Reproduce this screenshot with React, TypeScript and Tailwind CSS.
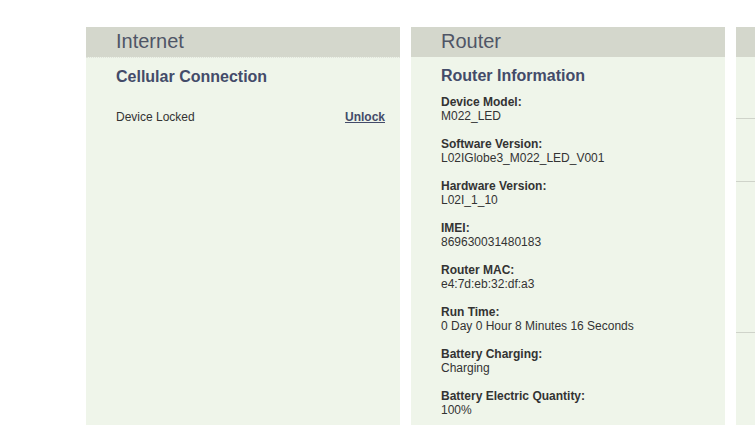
import React from 'react';

const font = { fontFamily: '"Liberation Sans", Arial, sans-serif' };

// Router info rows
const routerInfo = [
  { label: 'Device Model:', value: 'M022_LED' },
  { label: 'Software Version:', value: 'L02IGlobe3_M022_LED_V001' },
  { label: 'Hardware Version:', value: 'L02I_1_10' },
  { label: 'IMEI:', value: '869630031480183' },
  { label: 'Router MAC:', value: 'e4:7d:eb:32:df:a3' },
  { label: 'Run Time:', value: '0 Day 0 Hour 8 Minutes 16 Seconds' },
  { label: 'Battery Charging:', value: 'Charging' },
  { label: 'Battery Electric Quantity:', value: '100%' },
];

const PanelHeader: React.FC<{ title: string }> = ({ title }) => (
  <div className="h-[30px] bg-[#d4d7cc] pl-[30px] text-[20px] leading-[28px] text-[#4f5566]">{title}</div>
);

export default function App() {
  return (
    <div style={font} className="w-[755px] h-[425px] overflow-hidden bg-white">
      <div className="flex gap-[11px] pl-[86px] pt-[27px] h-full">
        {/* Internet */}
        <div className="w-[314px] shrink-0 flex flex-col">
          <PanelHeader title="Internet" />
          <div className="flex-1 bg-[#eff5ea] border-t border-dotted border-[#dfe3da] pl-[30px] pr-[15px]">
            <h3 className="mt-[9px] text-[16px] leading-[20px] font-bold text-[#434b69]">Cellular Connection</h3>
            <div className="mt-[23px] flex items-center justify-between text-[12px] leading-[14px] text-[#333]">
              <span>Device Locked</span>
              <a className="font-bold underline text-[#434b69]">Unlock</a>
            </div>
          </div>
        </div>

        {/* Router */}
        <div className="w-[314px] shrink-0 flex flex-col">
          <PanelHeader title="Router" />
          <div className="flex-1 bg-[#eff5ea] pl-[30px] pr-[15px]">
            <h3 className="mt-[9px] text-[16px] leading-[20px] font-bold text-[#434b69]">Router Information</h3>
            <div className="mt-[9px] flex flex-col gap-[14px] text-[12px] leading-[14px] text-[#333]">
              {routerInfo.map((item) => (
                <div key={item.label}>
                  <div className="font-bold">{item.label}</div>
                  <div>{item.value}</div>
                </div>
              ))}
            </div>
          </div>
        </div>

        {/* Third panel, cut off */}
        <div className="w-[314px] shrink-0 flex flex-col">
          <PanelHeader title="" />
          <div className="flex-1 bg-[#eff5ea]">
            <div className="h-[62px] border-b border-[#cfd3ca]" />
            <div className="h-[63px] border-b border-[#cfd3ca]" />
            <div className="h-[151px] border-b border-[#cfd3ca]" />
          </div>
        </div>
      </div>
    </div>
  );
}
